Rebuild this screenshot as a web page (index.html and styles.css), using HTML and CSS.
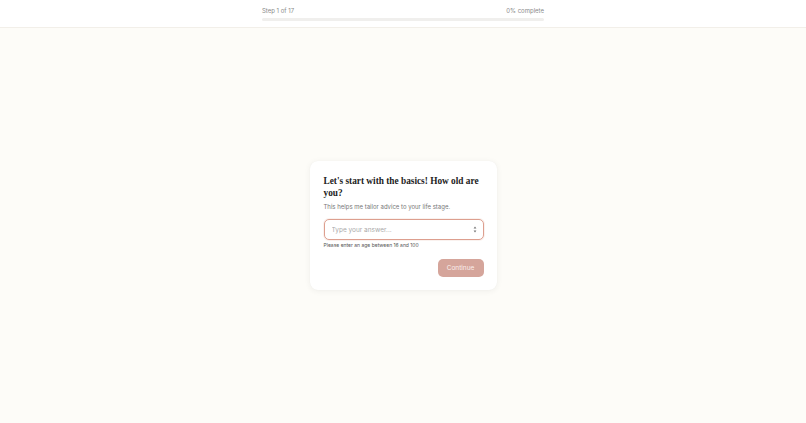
FILE: index.html
```html
<!DOCTYPE html>
<html>
<head>
<meta charset="utf-8">
<link rel="stylesheet" href="styles.css">
</head>
<body>
<header class="topbar">
  <div class="topbar-inner">
    <div class="progress-labels">
      <span>Step 1 of 17</span>
      <span>0% complete</span>
    </div>
    <div class="progress-track"><div class="progress-fill" style="width:0%"></div></div>
  </div>
</header>
<main class="stage">
  <section class="card">
    <h1 class="question">Let's start with the basics! How old are you?</h1>
    <p class="hint">This helps me tailor advice to your life stage.</p>
    <div class="field">
      <input class="answer" type="text" placeholder="Type your answer...">
      <svg class="spin" width="4" height="7" viewBox="0 0 4 7"><path d="M2 0.6 L3.4 2.6 L0.6 2.6 Z" fill="#777"/><path d="M2 6.4 L3.4 4.4 L0.6 4.4 Z" fill="#777"/></svg>
    </div>
    <p class="helper">Please enter an age between 16 and 100</p>
    <div class="actions">
      <button class="continue">Continue</button>
    </div>
  </section>
</main>
</body>
</html>
```

FILE: styles.css
```css
* { box-sizing: border-box; }
html, body { margin: 0; padding: 0; }
body {
  background: #fdfcf8;
  font-family: Inter, "Noto Sans", sans-serif;
  color: #2b2b2b;
  height: 423px;
  display: flex;
  flex-direction: column;
}
.topbar {
  background: #ffffff;
  border-bottom: 1px solid #f2efe9;
  height: 28px;
  flex: none;
}
.topbar-inner {
  width: 282px;
  margin: 0 auto;
  padding-top: 7px;
}
.progress-labels {
  display: flex;
  justify-content: space-between;
  font-size: 6px;
  color: #8a8a8a;
  line-height: 8px;
}
.progress-track {
  margin-top: 3px;
  height: 3px;
  background: #f0efed;
  border-radius: 2px;
}
.progress-fill { height: 100%; background: #d59a8b; }
.stage {
  flex: 1;
  display: flex;
  align-items: center;
  justify-content: center;
}
.card {
  width: 187px;
  background: #ffffff;
  border-radius: 8px;
  box-shadow: 0 1px 6px rgba(0,0,0,0.06), 0 0 1px rgba(0,0,0,0.05);
  padding: 14px 13px 13px 14px;
}
.question {
  font-family: "Liberation Serif", "DejaVu Serif", serif;
  font-weight: 700;
  font-size: 9.3px;
  line-height: 12px;
  color: #222;
  margin: 0;
}
.hint {
  font-size: 6px;
  color: #777;
  margin: 4px 0 0;
  line-height: 8px;
}
.field {
  margin-top: 8px;
  position: relative;
}
.answer {
  display: block;
  width: 100%;
  height: 21px;
  border: 1.5px solid #dd9f8f;
  border-radius: 5px;
  padding: 0 7px;
  font-family: inherit;
  font-size: 6.5px;
  color: #333;
  background: #fff;
  outline: none;
  box-shadow: 0 0 0 1px rgba(217,145,127,0.12);
}
.answer::placeholder { color: #a9a9a9; }
.spin {
  position: absolute;
  right: 7px;
  top: 7px;
}
.helper {
  font-size: 5px;
  color: #555;
  margin: 2px 0 0;
  line-height: 7px;
}
.actions {
  display: flex;
  justify-content: flex-end;
  margin-top: 10px;
}
.continue {
  width: 46px;
  height: 18px;
  border: none;
  border-radius: 5px;
  background: #d5a59b;
  color: #fbefec;
  font-family: inherit;
  font-size: 6.5px;
  padding: 0;
}
```
